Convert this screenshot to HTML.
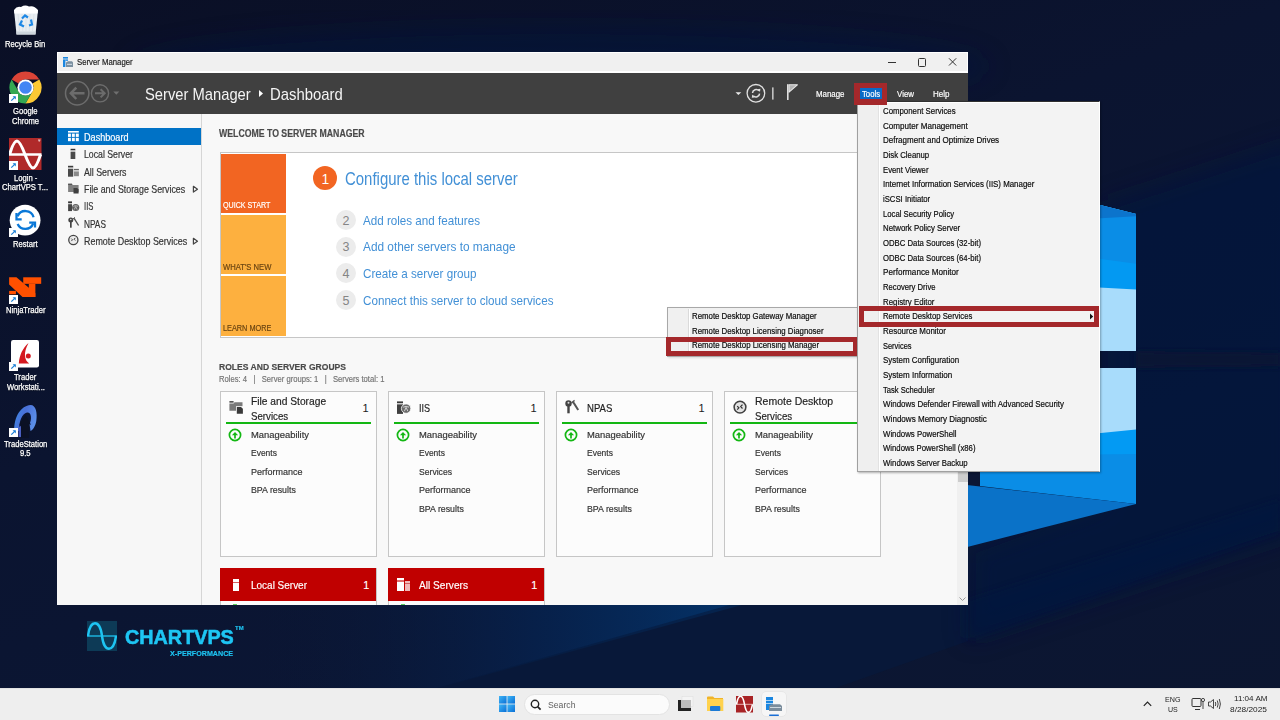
<!DOCTYPE html>
<html><head><meta charset="utf-8"><title>Server Manager</title>
<style>
html,body{margin:0;padding:0;}
body{width:1280px;height:720px;overflow:hidden;position:relative;font-family:"Liberation Sans",sans-serif;background:#0b1430;}
.r{position:absolute;box-sizing:content-box;}
.t{position:absolute;white-space:pre;transform-origin:0 0;-webkit-text-stroke-width:0.18px;}
</style></head><body>
<div class="r" style="left:0;top:0;width:1280px;height:720px;background:linear-gradient(160deg,#0a0f25 0%,#0b1430 40%,#0b1634 70%,#0c1630 100%);"></div>
<svg class="r" style="left:0;top:0" width="1280" height="720" viewBox="0 0 1280 720">
<defs>
<linearGradient id="beam" x1="0" y1="0" x2="1" y2="1"><stop offset="0" stop-color="#0c1d44" stop-opacity="0.0"/><stop offset="1" stop-color="#0a1f4a" stop-opacity="0.6"/></linearGradient>
</defs>
<filter id="bl" x="-20%" y="-20%" width="140%" height="140%"><feGaussianBlur stdDeviation="3"/></filter>
<filter id="bl2" x="-20%" y="-20%" width="140%" height="140%"><feGaussianBlur stdDeviation="12"/></filter>
<ellipse cx="560" cy="66" rx="430" ry="40" fill="#05183f" opacity="0.45" filter="url(#bl2)"/>
<linearGradient id="bm" x1="250" y1="0" x2="760" y2="0" gradientUnits="userSpaceOnUse"><stop offset="0" stop-color="#0a1634" stop-opacity="0"/><stop offset="0.55" stop-color="#06224e" stop-opacity="0.8"/><stop offset="1" stop-color="#04356c"/></linearGradient>
<polygon points="200,600 760,600 430,690 200,690" fill="url(#bm)"/>
<polygon points="430,690 740,602 968,602 968,641 830,690" fill="#071a3e" opacity="0.6"/>
<polygon points="1100,205 1300,140 1300,532 968,641 968,548 1100,500" fill="#05193f" opacity="0.6" filter="url(#bl2)"/>
<polygon points="1280,532 968,641 968,600 1280,500" fill="#05193f" opacity="0.5" filter="url(#bl)"/>
<polygon points="1136,351 1280,352.5 1280,366.5 1136,368" fill="#0a1530" opacity="0.7" filter="url(#bl)"/>
<!-- upper right pane -->
<polygon points="960,170 1136,214 1136,351 960,351" fill="#a8dcfb"/>
<polygon points="960,170 1136,214 1136,289.5 960,280" fill="#0399f2"/>
<polygon points="960,170 1136,214 1136,263.7 960,240" fill="#0a8de6"/>
<polygon points="960,170 1136,214 1136,216.2 960,226" fill="#0c74cc"/>
<!-- lower right pane -->
<polygon points="980,368 1136,368 1136,504 980,486" fill="#0a8de6"/>
<polygon points="960,368 1136,368 1136,454 960,456" fill="#039af3"/>
<polygon points="960,368 1136,368 1136,429.4 960,447" fill="#a8dcfb"/>
<!-- light wedge on floor -->
<polygon points="940,482 1136,504 940,554" fill="#0a72c8"/>
</svg>
<svg class="r" style="left:12px;top:4px" width="28" height="32" viewBox="0 0 28 32">
<path d="M2 6 L26 6 L23.5 30.5 L4.5 30.5 Z" fill="#e9eef2"/>
<path d="M2 6 Q5 1.5 9 3 Q13 0.5 17 2.5 Q22 1 26 6 L25.6 9.5 L2.4 9.5 Z" fill="#ffffff"/>
<path d="M4.5 30.5 L23.5 30.5 L23.8 27.5 L4.2 27.5 Z" fill="#cdd5dc"/>
<path d="M6 10 L7.5 27 M10 10 L10.8 27 M14 10 V27 M18 10 L17.2 27 M22 10 L20.5 27" stroke="#d3dbe2" stroke-width="0.6"/>
<g fill="none" stroke="#1e88e5" stroke-width="2.2"><path d="M10 14.5 L13 11.5 L16 13.5"/><path d="M19 15.5 L20 20.5 L17 21.5"/><path d="M12 22.5 L8 20.5 L10 16.5"/></g>
</svg>
<div class="t m" id="t1" style="left:5.38px;top:40.00px;font-size:8.40px;line-height:8.40px;color:#ffffff;transform:scaleX(0.9100);text-shadow:0 1px 1px rgba(0,0,0,0.55);-webkit-text-stroke-width:0.25px;">Recycle Bin</div>
<svg class="r" style="left:9px;top:71px" width="33" height="33" viewBox="-16.5 -16.5 33 33">
<path d="M0 -16 A16 16 0 0 1 13.86 -8 L0 -8 A8 8 0 0 0 -6.93 -4 L-13.86 -8 A16 16 0 0 1 0 -16Z" fill="#db4437"/>
<path d="M13.86 -8 A16 16 0 0 1 0 16 L6.93 4 A8 8 0 0 0 6.93 -4 Z" fill="#fcc934"/>
<path d="M-13.86 -8 L-6.93 4 A8 8 0 0 0 6.93 4 L0 16 A16 16 0 0 1 -13.86 -8Z" fill="#34a853"/>
<circle r="8.1" fill="#fff"/><circle r="6.3" fill="#4285f4"/>
</svg>
<svg class="r" style="left:9px;top:94px" width="9" height="9" viewBox="0 0 9 9"><rect width="9" height="9" fill="#fff"/><path d="M2.3 6.7 L6.2 2.8" stroke="#1a7fd6" stroke-width="1.2" fill="none"/><path d="M3.6 2.2 H6.8 V5.4 Z" fill="#1a7fd6"/></svg>
<div class="t m" id="t2" style="left:13.21px;top:107.00px;font-size:8.40px;line-height:8.40px;color:#ffffff;transform:scaleX(0.9100);text-shadow:0 1px 1px rgba(0,0,0,0.55);-webkit-text-stroke-width:0.25px;">Google</div>
<div class="t m" id="t3" style="left:11.94px;top:117.00px;font-size:8.40px;line-height:8.40px;color:#ffffff;transform:scaleX(0.9100);text-shadow:0 1px 1px rgba(0,0,0,0.55);-webkit-text-stroke-width:0.25px;">Chrome</div>
<svg class="r" style="left:9px;top:137.5px" width="32.5" height="32.5" viewBox="0 0 32.5 32.5">
<rect width="32.5" height="32.5" fill="#b02a2a"/>
<line x1="0" y1="16.5" x2="32.5" y2="16.5" stroke="#fff" stroke-width="2.6"/>
<path d="M0.6 16.5 C 2.61 9.59 5.33 3 8 3 S 13.39 9.59 16 16.5 S 21.33 30 24 30 S 29.39 23.41 31.6 16.5" stroke="#fff" stroke-width="3" fill="none"/>
<path d="M29 2 H31.5 M30.2 2 V3.8" stroke="#fff" stroke-width="0.7"/>
</svg>
<svg class="r" style="left:9px;top:161px" width="9" height="9" viewBox="0 0 9 9"><rect width="9" height="9" fill="#fff"/><path d="M2.3 6.7 L6.2 2.8" stroke="#1a7fd6" stroke-width="1.2" fill="none"/><path d="M3.6 2.2 H6.8 V5.4 Z" fill="#1a7fd6"/></svg>
<div class="t m" id="t4" style="left:13.85px;top:174.00px;font-size:8.40px;line-height:8.40px;color:#ffffff;transform:scaleX(0.9100);text-shadow:0 1px 1px rgba(0,0,0,0.55);-webkit-text-stroke-width:0.25px;">Login -</div>
<div class="t m" id="t5" style="left:2.48px;top:183.00px;font-size:8.40px;line-height:8.40px;color:#ffffff;transform:scaleX(0.9100);text-shadow:0 1px 1px rgba(0,0,0,0.55);-webkit-text-stroke-width:0.25px;">ChartVPS T...</div>
<svg class="r" style="left:9px;top:204px" width="33" height="33" viewBox="0 0 33 33">
<circle cx="16.1" cy="16.2" r="15.4" fill="#fff"/>
<g stroke="#0a78d8" stroke-width="2.3" fill="none">
<path d="M8.6 12.2 A8.5 8.5 0 0 1 24.6 13.2"/>
<path d="M7.5 9 V15.4 H12.7"/>
<path d="M8.6 20 A8.5 8.5 0 0 0 24.2 19.5"/>
<path d="M20.2 18.6 H26 V23.5"/>
</g>
</svg>
<svg class="r" style="left:9px;top:228px" width="9" height="9" viewBox="0 0 9 9"><rect width="9" height="9" fill="#fff"/><path d="M2.3 6.7 L6.2 2.8" stroke="#1a7fd6" stroke-width="1.2" fill="none"/><path d="M3.6 2.2 H6.8 V5.4 Z" fill="#1a7fd6"/></svg>
<div class="t m" id="t6" style="left:13.21px;top:240.00px;font-size:8.40px;line-height:8.40px;color:#ffffff;transform:scaleX(0.9100);text-shadow:0 1px 1px rgba(0,0,0,0.55);-webkit-text-stroke-width:0.25px;">Restart</div>
<svg class="r" style="left:5px;top:270px" width="40" height="30" viewBox="0 0 40 30" fill="#ff5000">
<polygon points="4.13,7.29 11.42,7.29 30.37,23.32 30.37,26.97 17.49,26.97 4.13,14.58"/>
<polygon points="18.22,7.29 36.2,7.29 36.2,13.85 18.22,13.85"/>
<polygon points="23.81,13.85 30.37,13.85 30.37,26.97 23.81,26.97"/>
<polygon points="4.13,20.89 10.93,20.89 10.93,24.3 4.13,24.3"/>
</svg>
<svg class="r" style="left:9px;top:295px" width="9" height="9" viewBox="0 0 9 9"><rect width="9" height="9" fill="#fff"/><path d="M2.3 6.7 L6.2 2.8" stroke="#1a7fd6" stroke-width="1.2" fill="none"/><path d="M3.6 2.2 H6.8 V5.4 Z" fill="#1a7fd6"/></svg>
<div class="t m" id="t7" style="left:5.73px;top:306.00px;font-size:8.40px;line-height:8.40px;color:#ffffff;transform:scaleX(0.9100);text-shadow:0 1px 1px rgba(0,0,0,0.55);-webkit-text-stroke-width:0.25px;">NinjaTrader</div>
<svg class="r" style="left:10.8px;top:340px" width="28" height="28" viewBox="0 0 28 28">
<rect width="28" height="27.4" rx="2.2" fill="#fff"/>
<path d="M17.5 3 C 11.5 8.5, 8.5 15, 7.8 23.4 L 18.2 23.4 C 13.5 20.5, 12 13, 17.5 3Z" fill="#d41920"/>
<circle cx="17.3" cy="16.1" r="2.5" fill="#d41920"/>
</svg>
<svg class="r" style="left:9px;top:362px" width="9" height="9" viewBox="0 0 9 9"><rect width="9" height="9" fill="#fff"/><path d="M2.3 6.7 L6.2 2.8" stroke="#1a7fd6" stroke-width="1.2" fill="none"/><path d="M3.6 2.2 H6.8 V5.4 Z" fill="#1a7fd6"/></svg>
<div class="t m" id="t8" style="left:14.42px;top:373.00px;font-size:8.40px;line-height:8.40px;color:#ffffff;transform:scaleX(0.9100);text-shadow:0 1px 1px rgba(0,0,0,0.55);-webkit-text-stroke-width:0.25px;">Trader</div>
<div class="t m" id="t9" style="left:6.51px;top:383.00px;font-size:8.40px;line-height:8.40px;color:#ffffff;transform:scaleX(0.9100);text-shadow:0 1px 1px rgba(0,0,0,0.55);-webkit-text-stroke-width:0.25px;">Workstati...</div>
<svg class="r" style="left:8px;top:400px" width="34" height="38" viewBox="0 0 34 38">
<defs><linearGradient id="tsg" x1="0" y1="0" x2="1" y2="0.4"><stop offset="0" stop-color="#3a8ee6"/><stop offset="0.5" stop-color="#4a70d8"/><stop offset="1" stop-color="#5a8ee8"/></linearGradient></defs>
<path d="M6.3 30 C 6 17, 13 5.5, 22.5 5 C 28 5, 29.5 13, 28.3 21 C 27.5 26, 25 30, 22.5 31 L 21.5 24 C 24 19, 23.5 12, 19 12.5 C 14 13.5, 11 21, 11 31 Z" fill="url(#tsg)"/>
<path d="M17.4 14.6 L11.3 24.8 L13.2 24.2 V38 H21.1 V24.2 L23 24.8 Z" fill="#0b1124"/>
<path d="M10.5 27 V37 H13 V26 Z" fill="#4a5fc0"/>
</svg>
<svg class="r" style="left:9px;top:428px" width="9" height="9" viewBox="0 0 9 9"><rect width="9" height="9" fill="#fff"/><path d="M2.3 6.7 L6.2 2.8" stroke="#1a7fd6" stroke-width="1.2" fill="none"/><path d="M3.6 2.2 H6.8 V5.4 Z" fill="#1a7fd6"/></svg>
<div class="t m" id="t10" style="left:3.82px;top:440.00px;font-size:8.40px;line-height:8.40px;color:#ffffff;transform:scaleX(0.9100);text-shadow:0 1px 1px rgba(0,0,0,0.55);-webkit-text-stroke-width:0.25px;">TradeStation</div>
<div class="t m" id="t11" style="left:20.20px;top:449.00px;font-size:8.40px;line-height:8.40px;color:#ffffff;transform:scaleX(0.9100);text-shadow:0 1px 1px rgba(0,0,0,0.55);-webkit-text-stroke-width:0.25px;">9.5</div>
<svg class="r" style="left:87px;top:621px" width="30" height="30" viewBox="0 0 30 30">
<rect width="30" height="30" fill="#0d3a56"/>
<line x1="0" y1="15" x2="30" y2="15" stroke="#1ec4f2" stroke-width="1.3"/>
<path d="M1 15 C 3 -2, 13 -2, 15 15 S 27 32, 29 15" stroke="#1ec4f2" stroke-width="2.4" fill="none"/>
</svg>
<div class="t m" id="t12" style="left:125.20px;top:626.00px;font-size:21.08px;line-height:21.08px;color:#1ec6f4;font-weight:700;transform:scaleX(0.9383);-webkit-text-stroke-width:0.6px;">CHARTVPS</div>
<div class="t m" id="t13" style="left:235.40px;top:625.00px;font-size:6.10px;line-height:6.10px;color:#1ec4f2;font-weight:700;transform:scaleX(0.9759);">TM</div>
<div class="t m" id="t14" style="left:169.60px;top:650.00px;font-size:7.70px;line-height:7.70px;color:#1ec4f2;font-weight:700;transform:scaleX(0.9290);">X-PERFORMANCE</div>
<div class="r" style="left:57.00px;top:52.00px;width:911.00px;height:553.00px;background:#ffffff;"></div>
<div class="r" style="left:58.00px;top:53.00px;width:909.00px;height:18.00px;background:#f0f0f0;"></div>
<svg class="r" style="left:62px;top:57px" width="12" height="11" viewBox="0 0 12 11">
<rect x="1" y="0" width="5" height="1.6" fill="#1a86e0"/><rect x="1" y="2.4" width="2.4" height="7.6" fill="#1a86e0"/><rect x="3.4" y="2.4" width="2.6" height="1.4" fill="#1a86e0"/>
<path d="M4 5.5 L6 4.2 H10 L11 5.5 V10 H4 Z" fill="#7a8fa0"/><rect x="5" y="6.8" width="5" height="1" fill="#d8e2ea"/>
</svg>
<div class="t m" id="t15" style="left:77.30px;top:58.00px;font-size:9.01px;line-height:9.01px;color:#1a1a1a;transform:scaleX(0.8616);">Server Manager</div>
<div class="r" style="left:888.30px;top:61.70px;width:7.40px;height:1.00px;background:#333;"></div>
<div class="r" style="left:918px;top:58.3px;width:6.4px;height:6.4px;border:1px solid #333;border-radius:1.5px"></div>
<svg class="r" style="left:948px;top:57px" width="10" height="10" viewBox="0 0 10 10"><path d="M1 1.3 L8.2 8.5 M8.2 1.3 L1 8.5" stroke="#333" stroke-width="1"/></svg>
<div class="r" style="left:57.00px;top:72.50px;width:911.00px;height:41.00px;background:#404040;"></div>
<svg class="r" style="left:57px;top:72px" width="80" height="42" viewBox="57 72 80 42">
<circle cx="77.2" cy="93.3" r="11.7" stroke="#6c6c6c" stroke-width="1.5" fill="none"/>
<path d="M71.5 93.3 H84.5 M76.3 87.6 L70.8 93.3 L76.3 99" stroke="#6c6c6c" stroke-width="2.5" fill="none"/>
<circle cx="100" cy="93.3" r="8.6" stroke="#6c6c6c" stroke-width="1.4" fill="none"/>
<path d="M95 93.3 H104.5 M100.6 89.2 L104.7 93.3 L100.6 97.4" stroke="#6c6c6c" stroke-width="2" fill="none"/>
<path d="M113.3 91.6 H119.3 L116.3 94.8 Z" fill="#6f6f6f"/>
</svg>
<div class="t m" id="t16" style="left:144.60px;top:86.00px;font-size:17.15px;line-height:17.15px;color:#f4f4f4;transform:scaleX(0.8600);-webkit-text-stroke-width:0;">Server Manager</div>
<svg class="r" style="left:258px;top:89px" width="6" height="9" viewBox="0 0 6 9"><path d="M1 1 L5 4.5 L1 8 Z" fill="#fff"/></svg>
<div class="t m" id="t17" style="left:270.00px;top:86.00px;font-size:17.15px;line-height:17.15px;color:#f4f4f4;transform:scaleX(0.8669);-webkit-text-stroke-width:0;">Dashboard</div>
<svg class="r" style="left:730px;top:80px" width="75" height="25" viewBox="730 80 75 25">
<path d="M735.5 92.3 H741.3 L738.4 95 Z" fill="#e8e8e8"/>
<circle cx="755.9" cy="93.3" r="8.8" stroke="#e0e0e0" stroke-width="1.3" fill="none"/>
<path d="M752.5 93 A3.7 3.7 0 0 1 759 90.8" stroke="#e0e0e0" stroke-width="1.5" fill="none"/>
<path d="M759.6 93.6 A3.7 3.7 0 0 1 753.2 95.8" stroke="#e0e0e0" stroke-width="1.5" fill="none"/>
<path d="M757.6 89.2 L760.4 88.8 L760 92 Z M754.6 97.4 L751.8 97.8 L752.2 94.6 Z" fill="#e0e0e0"/>
<rect x="772.2" y="87.4" width="1.3" height="12.2" fill="#e0e0e0"/>
<rect x="787" y="84.2" width="1.6" height="15.8" fill="#e0e0e0"/>
<path d="M789 84.8 L797.4 84.8 L789 92.2 Z" fill="#b4b4b4" stroke="#e6e6e6" stroke-width="1.1" stroke-linejoin="round"/>
</svg>
<div class="t m" id="t18" style="left:816.10px;top:90.00px;font-size:8.72px;line-height:8.72px;color:#ffffff;transform:scaleX(0.9043);">Manage</div>
<div class="t m" id="t19" style="left:897.30px;top:90.00px;font-size:8.72px;line-height:8.72px;color:#ffffff;transform:scaleX(0.9067);">View</div>
<div class="t m" id="t20" style="left:933.10px;top:90.00px;font-size:8.72px;line-height:8.72px;color:#ffffff;transform:scaleX(0.9143);">Help</div>
<div class="r" style="left:57.00px;top:113.50px;width:144.00px;height:491.50px;background:#f7f7f7;"></div>
<div class="r" style="left:201.00px;top:113.50px;width:1.00px;height:491.50px;background:#d6d6d6;"></div>
<div class="r" style="left:57.00px;top:128.00px;width:143.60px;height:17.00px;background:#0072c6;"></div>
<svg class="r" style="left:68px;top:131px" width="11" height="11" viewBox="0 0 11 11" fill="#fff">
<rect x="0" y="0" width="10.8" height="1.6"/>
<rect x="0" y="2.6" width="2.9" height="3.3"/><rect x="3.9" y="2.6" width="2.9" height="3.3"/><rect x="7.8" y="2.6" width="3" height="3.3"/>
<rect x="0" y="6.8" width="2.9" height="3.4"/><rect x="3.9" y="6.8" width="2.9" height="3.4"/><rect x="7.8" y="6.8" width="3" height="3.4"/>
</svg>
<div class="t m" id="t21" style="left:84.40px;top:133.00px;font-size:10.03px;line-height:10.03px;color:#ffffff;transform:scaleX(0.9082);">Dashboard</div>
<div class="t m" id="t22" style="left:84.40px;top:150.00px;font-size:10.03px;line-height:10.03px;color:#333333;transform:scaleX(0.8714);">Local Server</div>
<div class="t m" id="t23" style="left:84.40px;top:168.00px;font-size:10.03px;line-height:10.03px;color:#333333;transform:scaleX(0.8777);">All Servers</div>
<div class="t m" id="t24" style="left:84.40px;top:185.00px;font-size:10.03px;line-height:10.03px;color:#333333;transform:scaleX(0.8824);">File and Storage Services</div>
<div class="t m" id="t25" style="left:84.40px;top:202.00px;font-size:10.03px;line-height:10.03px;color:#333333;transform:scaleX(0.7673);">IIS</div>
<div class="t m" id="t26" style="left:84.40px;top:220.00px;font-size:10.03px;line-height:10.03px;color:#333333;transform:scaleX(0.8254);">NPAS</div>
<div class="t m" id="t27" style="left:84.40px;top:237.00px;font-size:10.03px;line-height:10.03px;color:#333333;transform:scaleX(0.8904);">Remote Desktop Services</div>
<svg class="r" style="left:57px;top:113px" width="144" height="140" viewBox="57 113 144 140">
<rect x="70.6" y="148.8" width="4.7" height="1.6" fill="#333"/><rect x="70.6" y="150.4" width="4.7" height="1.5" fill="#c4c4c4"/><rect x="70.6" y="151.9" width="4.7" height="7.1" fill="#4a4a4a"/>
<rect x="68" y="165.8" width="5.2" height="1.8" fill="#3c3c3c"/><rect x="68" y="167.6" width="5.2" height="1.4" fill="#c4c4c4"/><rect x="68" y="169" width="5.2" height="7.7" fill="#4a4a4a"/>
<rect x="73.9" y="168.9" width="5" height="1.4" fill="#666"/><rect x="73.9" y="170.3" width="5" height="1.2" fill="#d0d0d0"/><rect x="73.9" y="171.5" width="5" height="4.7" fill="#8a8a8a"/>
<path d="M68.1 183.7 H72 L72.8 185 H78.6 V192 H68.1 Z" fill="#808080"/><path d="M68.1 183.7 H72 V185 H68.1 Z" fill="#555"/><path d="M73.5 188 H77.2 L78.6 189.4 V193.4 H73.5 Z" fill="#3e3e3e"/>
<rect x="68.1" y="201.4" width="3.9" height="1.6" fill="#333"/><rect x="68.1" y="203" width="3.9" height="1.2" fill="#c4c4c4"/><rect x="68.1" y="204.2" width="3.9" height="6.9" fill="#444"/>
<circle cx="75.7" cy="207.5" r="3.6" fill="#5e5e5e"/><path d="M73.4 206.3 Q75.7 205 78 206.3 M74.3 209.5 L75.7 206.5 L77.1 209.5" stroke="#d8d8d8" stroke-width="0.7" fill="none"/>
<circle cx="70.8" cy="219.9" r="2.5" fill="#444"/><circle cx="70.8" cy="219.5" r="0.8" fill="#ddd"/><rect x="70" y="221.5" width="1.7" height="6.2" fill="#444"/>
<path d="M73.8 218.2 L74.8 219.5 L78.6 225.5" stroke="#555" stroke-width="1.4" fill="none"/><path d="M72.8 219.2 L74.9 217.3" stroke="#555" stroke-width="1" fill="none"/>
<circle cx="73.35" cy="240" r="4.6" fill="#ececec" stroke="#444" stroke-width="1.3"/>
<path d="M71.3 238.6 L72.5 239.8 L71.3 241.1 M75.3 237.9 L74.1 239.2 L75.3 240.5" stroke="#333" stroke-width="0.9" fill="none"/>
<path d="M193.4 186.3 L197.5 189.2 L193.4 192.1 Z" fill="none" stroke="#444" stroke-width="1.2" stroke-linejoin="round"/>
<path d="M193.4 238.3 L197.5 241.2 L193.4 244.1 Z" fill="none" stroke="#444" stroke-width="1.2" stroke-linejoin="round"/>
</svg>
<div class="r" style="left:202.00px;top:113.50px;width:755.00px;height:491.50px;background:#f8f8f8;"></div>
<div class="t m" id="t28" style="left:218.90px;top:129.00px;font-size:10.17px;line-height:10.17px;color:#4a4a4a;font-weight:700;transform:scaleX(0.8591);">WELCOME TO SERVER MANAGER</div>
<div class="r" style="left:219.6px;top:152.3px;width:660px;height:183.7px;border:1px solid #c6c6c6;background:#ffffff"></div>
<div class="r" style="left:221.00px;top:154.00px;width:64.70px;height:58.80px;background:#f26522;"></div>
<div class="r" style="left:221.00px;top:215.00px;width:64.70px;height:58.80px;background:#fdb03f;"></div>
<div class="r" style="left:221.00px;top:276.00px;width:64.70px;height:59.50px;background:#fdb03f;"></div>
<div class="t m" id="t29" style="left:223.10px;top:202.00px;font-size:8.14px;line-height:8.14px;color:#ffffff;transform:scaleX(0.8780);">QUICK START</div>
<div class="t m" id="t30" style="left:223.10px;top:264.00px;font-size:8.14px;line-height:8.14px;color:#6b4512;transform:scaleX(0.9398);">WHAT&#x27;S NEW</div>
<div class="t m" id="t31" style="left:223.10px;top:325.00px;font-size:8.14px;line-height:8.14px;color:#6b4512;transform:scaleX(0.9007);">LEARN MORE</div>
<div class="r" style="left:313.3px;top:166px;width:24px;height:24px;border-radius:50%;background:#f26522"></div>
<div class="t m" id="t32" style="left:321.42px;top:173.00px;font-size:13.95px;line-height:13.95px;color:#ffffff;-webkit-text-stroke-width:0;">1</div>
<div class="t m" id="t33" style="left:344.50px;top:171.00px;font-size:17.44px;line-height:17.44px;color:#4290d6;transform:scaleX(0.8572);-webkit-text-stroke-width:0;">Configure this local server</div>
<div class="r" style="left:336px;top:210.00px;width:20px;height:20px;border-radius:50%;background:#ececec"></div>
<div class="t m" id="t34" style="left:342.52px;top:215.00px;font-size:12.50px;line-height:12.50px;color:#858585;-webkit-text-stroke-width:0;">2</div>
<div class="t m" id="t35" style="left:363.20px;top:215.00px;font-size:12.79px;line-height:12.79px;color:#4290d6;transform:scaleX(0.9097);-webkit-text-stroke-width:0;">Add roles and features</div>
<div class="r" style="left:336px;top:236.67px;width:20px;height:20px;border-radius:50%;background:#ececec"></div>
<div class="t m" id="t36" style="left:342.52px;top:241.00px;font-size:12.50px;line-height:12.50px;color:#858585;-webkit-text-stroke-width:0;">3</div>
<div class="t m" id="t37" style="left:363.20px;top:241.00px;font-size:12.79px;line-height:12.79px;color:#4290d6;transform:scaleX(0.9258);-webkit-text-stroke-width:0;">Add other servers to manage</div>
<div class="r" style="left:336px;top:263.34px;width:20px;height:20px;border-radius:50%;background:#ececec"></div>
<div class="t m" id="t38" style="left:342.52px;top:268.00px;font-size:12.50px;line-height:12.50px;color:#858585;-webkit-text-stroke-width:0;">4</div>
<div class="t m" id="t39" style="left:363.20px;top:268.00px;font-size:12.79px;line-height:12.79px;color:#4290d6;transform:scaleX(0.9129);-webkit-text-stroke-width:0;">Create a server group</div>
<div class="r" style="left:336px;top:290.01px;width:20px;height:20px;border-radius:50%;background:#ececec"></div>
<div class="t m" id="t40" style="left:342.52px;top:295.00px;font-size:12.50px;line-height:12.50px;color:#858585;-webkit-text-stroke-width:0;">5</div>
<div class="t m" id="t41" style="left:363.20px;top:295.00px;font-size:12.79px;line-height:12.79px;color:#4290d6;transform:scaleX(0.9121);-webkit-text-stroke-width:0;">Connect this server to cloud services</div>
<div class="t m" id="t42" style="left:219.10px;top:362.00px;font-size:9.45px;line-height:9.45px;color:#4a4a4a;font-weight:700;transform:scaleX(0.9070);">ROLES AND SERVER GROUPS</div>
<div class="t m" id="t43" style="left:219.00px;top:375.00px;font-size:8.72px;line-height:8.72px;color:#747474;transform:scaleX(0.8767);">Roles: 4   |   Server groups: 1   |   Servers total: 1</div>
<div class="r" style="left:220px;top:390.9px;width:155px;height:164.5px;border:1px solid #c6c6c6;background:#fcfcfc"></div>
<div class="t m" id="t44" style="left:251.00px;top:396.00px;font-size:11.19px;line-height:11.19px;color:#222222;transform:scaleX(0.9148);">File and Storage</div>
<div class="t m" id="t45" style="left:251.00px;top:411.00px;font-size:11.19px;line-height:11.19px;color:#222222;transform:scaleX(0.8670);">Services</div>
<div class="t m" id="t46" style="left:362.60px;top:403.00px;font-size:11.05px;line-height:11.05px;color:#222222;-webkit-text-stroke-width:0;">1</div>
<div class="r" style="left:226.00px;top:422.10px;width:144.70px;height:2.00px;background:#13b713;"></div>
<svg class="r" style="left:228.0px;top:427.5px" width="14" height="14" viewBox="0 0 14 14"><circle cx="7" cy="7" r="5.6" stroke="#13b713" stroke-width="1.7" fill="none"/><path d="M7 10.6 V5.5" stroke="#13b713" stroke-width="1.7" fill="none"/><path d="M3.9 7.3 L7 3.9 L10.1 7.3 Z" fill="#13b713"/></svg>
<div class="t m" id="t47" style="left:251.00px;top:430.00px;font-size:9.45px;line-height:9.45px;color:#333333;transform:scaleX(0.9960);">Manageability</div>
<div class="t m" id="t48" style="left:251.00px;top:448.00px;font-size:9.45px;line-height:9.45px;color:#333333;transform:scaleX(0.8975);">Events</div>
<div class="t m" id="t49" style="left:251.00px;top:467.00px;font-size:9.45px;line-height:9.45px;color:#333333;transform:scaleX(0.9532);">Performance</div>
<div class="t m" id="t50" style="left:251.00px;top:485.00px;font-size:9.45px;line-height:9.45px;color:#333333;transform:scaleX(0.9315);">BPA results</div>
<div class="r" style="left:388px;top:390.9px;width:155px;height:164.5px;border:1px solid #c6c6c6;background:#fcfcfc"></div>
<div class="t m" id="t51" style="left:419.00px;top:403.00px;font-size:11.19px;line-height:11.19px;color:#222222;transform:scaleX(0.8110);">IIS</div>
<div class="t m" id="t52" style="left:530.60px;top:403.00px;font-size:11.05px;line-height:11.05px;color:#222222;-webkit-text-stroke-width:0;">1</div>
<div class="r" style="left:394.00px;top:422.10px;width:144.70px;height:2.00px;background:#13b713;"></div>
<svg class="r" style="left:396.0px;top:427.5px" width="14" height="14" viewBox="0 0 14 14"><circle cx="7" cy="7" r="5.6" stroke="#13b713" stroke-width="1.7" fill="none"/><path d="M7 10.6 V5.5" stroke="#13b713" stroke-width="1.7" fill="none"/><path d="M3.9 7.3 L7 3.9 L10.1 7.3 Z" fill="#13b713"/></svg>
<div class="t m" id="t53" style="left:419.00px;top:430.00px;font-size:9.45px;line-height:9.45px;color:#333333;transform:scaleX(0.9960);">Manageability</div>
<div class="t m" id="t54" style="left:419.00px;top:448.00px;font-size:9.45px;line-height:9.45px;color:#333333;transform:scaleX(0.8975);">Events</div>
<div class="t m" id="t55" style="left:419.00px;top:467.00px;font-size:9.45px;line-height:9.45px;color:#333333;transform:scaleX(0.9115);">Services</div>
<div class="t m" id="t56" style="left:419.00px;top:485.00px;font-size:9.45px;line-height:9.45px;color:#333333;transform:scaleX(0.9532);">Performance</div>
<div class="t m" id="t57" style="left:419.00px;top:504.00px;font-size:9.45px;line-height:9.45px;color:#333333;transform:scaleX(0.9315);">BPA results</div>
<div class="r" style="left:556px;top:390.9px;width:155px;height:164.5px;border:1px solid #c6c6c6;background:#fcfcfc"></div>
<div class="t m" id="t58" style="left:587.00px;top:403.00px;font-size:11.19px;line-height:11.19px;color:#222222;transform:scaleX(0.8536);">NPAS</div>
<div class="t m" id="t59" style="left:698.60px;top:403.00px;font-size:11.05px;line-height:11.05px;color:#222222;-webkit-text-stroke-width:0;">1</div>
<div class="r" style="left:562.00px;top:422.10px;width:144.70px;height:2.00px;background:#13b713;"></div>
<svg class="r" style="left:564.0px;top:427.5px" width="14" height="14" viewBox="0 0 14 14"><circle cx="7" cy="7" r="5.6" stroke="#13b713" stroke-width="1.7" fill="none"/><path d="M7 10.6 V5.5" stroke="#13b713" stroke-width="1.7" fill="none"/><path d="M3.9 7.3 L7 3.9 L10.1 7.3 Z" fill="#13b713"/></svg>
<div class="t m" id="t60" style="left:587.00px;top:430.00px;font-size:9.45px;line-height:9.45px;color:#333333;transform:scaleX(0.9960);">Manageability</div>
<div class="t m" id="t61" style="left:587.00px;top:448.00px;font-size:9.45px;line-height:9.45px;color:#333333;transform:scaleX(0.8975);">Events</div>
<div class="t m" id="t62" style="left:587.00px;top:467.00px;font-size:9.45px;line-height:9.45px;color:#333333;transform:scaleX(0.9115);">Services</div>
<div class="t m" id="t63" style="left:587.00px;top:485.00px;font-size:9.45px;line-height:9.45px;color:#333333;transform:scaleX(0.9532);">Performance</div>
<div class="t m" id="t64" style="left:587.00px;top:504.00px;font-size:9.45px;line-height:9.45px;color:#333333;transform:scaleX(0.9315);">BPA results</div>
<div class="r" style="left:724px;top:390.9px;width:155px;height:164.5px;border:1px solid #c6c6c6;background:#fcfcfc"></div>
<div class="t m" id="t65" style="left:755.00px;top:396.00px;font-size:11.19px;line-height:11.19px;color:#222222;transform:scaleX(0.9373);">Remote Desktop</div>
<div class="t m" id="t66" style="left:755.00px;top:411.00px;font-size:11.19px;line-height:11.19px;color:#222222;transform:scaleX(0.8670);">Services</div>
<div class="t m" id="t67" style="left:866.60px;top:403.00px;font-size:11.05px;line-height:11.05px;color:#222222;-webkit-text-stroke-width:0;">1</div>
<div class="r" style="left:730.00px;top:422.10px;width:144.70px;height:2.00px;background:#13b713;"></div>
<svg class="r" style="left:732.0px;top:427.5px" width="14" height="14" viewBox="0 0 14 14"><circle cx="7" cy="7" r="5.6" stroke="#13b713" stroke-width="1.7" fill="none"/><path d="M7 10.6 V5.5" stroke="#13b713" stroke-width="1.7" fill="none"/><path d="M3.9 7.3 L7 3.9 L10.1 7.3 Z" fill="#13b713"/></svg>
<div class="t m" id="t68" style="left:755.00px;top:430.00px;font-size:9.45px;line-height:9.45px;color:#333333;transform:scaleX(0.9960);">Manageability</div>
<div class="t m" id="t69" style="left:755.00px;top:448.00px;font-size:9.45px;line-height:9.45px;color:#333333;transform:scaleX(0.8975);">Events</div>
<div class="t m" id="t70" style="left:755.00px;top:467.00px;font-size:9.45px;line-height:9.45px;color:#333333;transform:scaleX(0.9115);">Services</div>
<div class="t m" id="t71" style="left:755.00px;top:485.00px;font-size:9.45px;line-height:9.45px;color:#333333;transform:scaleX(0.9532);">Performance</div>
<div class="t m" id="t72" style="left:755.00px;top:504.00px;font-size:9.45px;line-height:9.45px;color:#333333;transform:scaleX(0.9315);">BPA results</div>
<svg class="r" style="left:220px;top:395px" width="660" height="25" viewBox="220 395 660 25">
<path d="M229.4 401 H233.6 V402.7 H229.4 Z" fill="#555"/><path d="M229.4 403.6 H233.6 L234.5 402.3 H242.5 V410.7 H229.4 Z" fill="#7a7a7a"/>
<rect x="236" y="406.2" width="7.6" height="8.2" fill="#fcfcfc"/><path d="M236.8 406.9 H241 L242.9 408.8 V413.8 H236.8 Z" fill="#3a3a3a"/>
<rect x="397" y="401.4" width="6" height="1.8" fill="#3a3a3a"/><rect x="397" y="403.2" width="6" height="1.2" fill="#c8c8c8"/><rect x="397" y="404.4" width="6" height="9.5" fill="#404040"/>
<circle cx="406.1" cy="408.6" r="4.7" fill="#6a6a6a" stroke="#fcfcfc" stroke-width="0.8"/><path d="M403.2 407.2 Q406.1 405.6 409 407.2 M404.4 411.2 L406.1 407.4 L407.8 411.2" stroke="#dcdcdc" stroke-width="0.9" fill="none"/>
<circle cx="568.5" cy="403.4" r="3.2" fill="#444"/><circle cx="568.5" cy="402.8" r="1" fill="#ddd"/><rect x="567.3" y="405.5" width="2.4" height="7.8" fill="#444"/>
<path d="M572.6 401.6 L574.2 403.6 L578.2 410" stroke="#555" stroke-width="2" fill="none"/><path d="M571.4 403 L574.6 400.4" stroke="#555" stroke-width="1.4" fill="none"/>
<circle cx="740" cy="407.1" r="5.9" fill="#e2e2e2" stroke="#404040" stroke-width="1.5"/>
<path d="M737.2 406.1 L738.9 407.8 L737.2 409.6 M742.5 404.6 L740.7 406.6 L742.5 408.5" stroke="#333" stroke-width="1.2" fill="none"/>
</svg>
<div class="r" style="left:220px;top:568.3px;width:155px;height:35.7px;border:1px solid #c6c6c6;border-bottom:0;background:#fcfcfc"></div>
<div class="r" style="left:233.00px;top:604.00px;width:4.00px;height:1.00px;background:#5fd05f;"></div>
<div class="r" style="left:220.00px;top:568.30px;width:156.20px;height:32.70px;background:#c00000;"></div>
<div class="t m" id="t73" style="left:250.80px;top:580.00px;font-size:10.76px;line-height:10.76px;color:#ffffff;transform:scaleX(0.9278);">Local Server</div>
<div class="t m" id="t74" style="left:363.30px;top:580.00px;font-size:10.76px;line-height:10.76px;color:#ffffff;">1</div>
<div class="r" style="left:388px;top:568.3px;width:155px;height:35.7px;border:1px solid #c6c6c6;border-bottom:0;background:#fcfcfc"></div>
<div class="r" style="left:401.00px;top:604.00px;width:4.00px;height:1.00px;background:#5fd05f;"></div>
<div class="r" style="left:388.00px;top:568.30px;width:156.20px;height:32.70px;background:#c00000;"></div>
<div class="t m" id="t75" style="left:418.80px;top:580.00px;font-size:10.76px;line-height:10.76px;color:#ffffff;transform:scaleX(0.9426);">All Servers</div>
<div class="t m" id="t76" style="left:531.30px;top:580.00px;font-size:10.76px;line-height:10.76px;color:#ffffff;">1</div>
<div class="r" style="left:232.50px;top:579.20px;width:6.40px;height:11.90px;background:#ffffff;"></div>
<div class="r" style="left:232.50px;top:581.70px;width:6.40px;height:1.20px;background:#d86060;"></div>
<div class="r" style="left:397.10px;top:578.00px;width:6.80px;height:13.10px;background:#ffffff;"></div>
<div class="r" style="left:397.10px;top:580.00px;width:6.80px;height:1.70px;background:#e07070;"></div>
<div class="r" style="left:404.90px;top:581.20px;width:5.10px;height:9.90px;background:#f0b8b8;"></div>
<div class="r" style="left:404.90px;top:582.60px;width:5.10px;height:1.00px;background:#d06060;"></div>
<div class="r" style="left:957.00px;top:113.50px;width:11.00px;height:491.50px;background:#f0f0f0;"></div>
<div class="r" style="left:957.50px;top:113.50px;width:10.00px;height:368.50px;background:#cdcdcd;"></div>
<svg class="r" style="left:958px;top:596px" width="9" height="6" viewBox="0 0 9 6"><path d="M1.5 1.5 L4.5 4.5 L7.5 1.5" stroke="#999" stroke-width="1" fill="none"/></svg>
<div class="r" style="left:667px;top:307px;width:190px;height:48px;border:1px solid #a8a8a8;background:#f0f0f0;box-shadow:1px 1px 2px rgba(0,0,0,0.12)"></div>
<div class="r" style="left:688.00px;top:309.00px;width:1.00px;height:45.00px;background:#dadada;"></div>
<div class="r" style="left:689.00px;top:309.00px;width:1.00px;height:45.00px;background:#ffffff;"></div>
<div class="t m" id="t77" style="left:692.30px;top:312.00px;font-size:8.58px;line-height:8.58px;color:#0a0a0a;transform:scaleX(0.9137);">Remote Desktop Gateway Manager</div>
<div class="t m" id="t78" style="left:692.30px;top:327.00px;font-size:8.58px;line-height:8.58px;color:#0a0a0a;transform:scaleX(0.9132);">Remote Desktop Licensing Diagnoser</div>
<div class="t m" id="t79" style="left:692.30px;top:341.00px;font-size:8.58px;line-height:8.58px;color:#0a0a0a;transform:scaleX(0.9159);">Remote Desktop Licensing Manager</div>
<div class="r" style="left:666px;top:337px;width:182px;height:9px;border:5px solid #a4282b;"></div>
<div class="r" style="left:857px;top:101px;width:241px;height:369px;border:1px solid #a0a0a0;border-top-color:#303030;border-right-color:#ffffff;background:#f3f3f3;box-shadow:1px 1px 2px rgba(0,0,0,0.3)"></div>
<div class="r" style="left:858.00px;top:102.00px;width:241.00px;height:1.00px;background:#ffffff;"></div>
<div class="r" style="left:858.00px;top:103.00px;width:20.00px;height:368.00px;background:#efefef;"></div>
<div class="r" style="left:878.00px;top:103.00px;width:1.00px;height:368.00px;background:#e2e2e2;"></div>
<div class="r" style="left:879.00px;top:103.00px;width:1.00px;height:368.00px;background:#ffffff;"></div>
<div class="t m" id="t80" style="left:883.20px;top:107.00px;font-size:8.58px;line-height:8.58px;color:#0a0a0a;transform:scaleX(0.9118);">Component Services</div>
<div class="t m" id="t81" style="left:883.20px;top:122.00px;font-size:8.58px;line-height:8.58px;color:#0a0a0a;transform:scaleX(0.9409);">Computer Management</div>
<div class="t m" id="t82" style="left:883.20px;top:136.00px;font-size:8.58px;line-height:8.58px;color:#0a0a0a;transform:scaleX(0.9330);">Defragment and Optimize Drives</div>
<div class="t m" id="t83" style="left:883.20px;top:151.00px;font-size:8.58px;line-height:8.58px;color:#0a0a0a;transform:scaleX(0.9053);">Disk Cleanup</div>
<div class="t m" id="t84" style="left:883.20px;top:166.00px;font-size:8.58px;line-height:8.58px;color:#0a0a0a;transform:scaleX(0.9029);">Event Viewer</div>
<div class="t m" id="t85" style="left:883.20px;top:180.00px;font-size:8.58px;line-height:8.58px;color:#0a0a0a;transform:scaleX(0.9198);">Internet Information Services (IIS) Manager</div>
<div class="t m" id="t86" style="left:883.20px;top:195.00px;font-size:8.58px;line-height:8.58px;color:#0a0a0a;transform:scaleX(0.8999);">iSCSI Initiator</div>
<div class="t m" id="t87" style="left:883.20px;top:210.00px;font-size:8.58px;line-height:8.58px;color:#0a0a0a;transform:scaleX(0.8995);">Local Security Policy</div>
<div class="t m" id="t88" style="left:883.20px;top:224.00px;font-size:8.58px;line-height:8.58px;color:#0a0a0a;transform:scaleX(0.9150);">Network Policy Server</div>
<div class="t m" id="t89" style="left:883.20px;top:239.00px;font-size:8.58px;line-height:8.58px;color:#0a0a0a;transform:scaleX(0.9015);">ODBC Data Sources (32-bit)</div>
<div class="t m" id="t90" style="left:883.20px;top:254.00px;font-size:8.58px;line-height:8.58px;color:#0a0a0a;transform:scaleX(0.9015);">ODBC Data Sources (64-bit)</div>
<div class="t m" id="t91" style="left:883.20px;top:268.00px;font-size:8.58px;line-height:8.58px;color:#0a0a0a;transform:scaleX(0.9464);">Performance Monitor</div>
<div class="t m" id="t92" style="left:883.20px;top:283.00px;font-size:8.58px;line-height:8.58px;color:#0a0a0a;transform:scaleX(0.8953);">Recovery Drive</div>
<div class="t m" id="t93" style="left:883.20px;top:298.00px;font-size:8.58px;line-height:8.58px;color:#0a0a0a;transform:scaleX(0.9153);">Registry Editor</div>
<div class="t m" id="t94" style="left:883.20px;top:312.00px;font-size:8.58px;line-height:8.58px;color:#0a0a0a;transform:scaleX(0.9005);">Remote Desktop Services</div>
<div class="t m" id="t95" style="left:883.20px;top:327.00px;font-size:8.58px;line-height:8.58px;color:#0a0a0a;transform:scaleX(0.9291);">Resource Monitor</div>
<div class="t m" id="t96" style="left:883.20px;top:342.00px;font-size:8.58px;line-height:8.58px;color:#0a0a0a;transform:scaleX(0.8691);">Services</div>
<div class="t m" id="t97" style="left:883.20px;top:356.00px;font-size:8.58px;line-height:8.58px;color:#0a0a0a;transform:scaleX(0.9279);">System Configuration</div>
<div class="t m" id="t98" style="left:883.20px;top:371.00px;font-size:8.58px;line-height:8.58px;color:#0a0a0a;transform:scaleX(0.9350);">System Information</div>
<div class="t m" id="t99" style="left:883.20px;top:386.00px;font-size:8.58px;line-height:8.58px;color:#0a0a0a;transform:scaleX(0.8848);">Task Scheduler</div>
<div class="t m" id="t100" style="left:883.20px;top:400.00px;font-size:8.58px;line-height:8.58px;color:#0a0a0a;transform:scaleX(0.9259);">Windows Defender Firewall with Advanced Security</div>
<div class="t m" id="t101" style="left:883.20px;top:415.00px;font-size:8.58px;line-height:8.58px;color:#0a0a0a;transform:scaleX(0.9393);">Windows Memory Diagnostic</div>
<div class="t m" id="t102" style="left:883.20px;top:430.00px;font-size:8.58px;line-height:8.58px;color:#0a0a0a;transform:scaleX(0.9122);">Windows PowerShell</div>
<div class="t m" id="t103" style="left:883.20px;top:444.00px;font-size:8.58px;line-height:8.58px;color:#0a0a0a;transform:scaleX(0.9024);">Windows PowerShell (x86)</div>
<div class="t m" id="t104" style="left:883.20px;top:459.00px;font-size:8.58px;line-height:8.58px;color:#0a0a0a;transform:scaleX(0.9063);">Windows Server Backup</div>
<div class="r" style="left:859px;top:306.1px;width:230px;height:10.6px;border:5px solid #a4282b;"></div>
<svg class="r" style="left:1089px;top:313px" width="5" height="7" viewBox="0 0 5 7"><path d="M1 0.5 L4.2 3.5 L1 6.5 Z" fill="#111"/></svg>
<div class="r" style="left:854.00px;top:83.00px;width:33.00px;height:22.00px;background:#a4282b;"></div>
<div class="r" style="left:859.50px;top:88.40px;width:22.00px;height:10.80px;background:#0a6ac6;"></div>
<div class="t m" id="t105" style="left:862.00px;top:90.00px;font-size:8.72px;line-height:8.72px;color:#ffffff;transform:scaleX(0.8841);">Tools</div>
<div class="r" style="left:0.00px;top:688.00px;width:1280.00px;height:32.00px;background:#eeeeee;"></div>
<div class="r" style="left:0.00px;top:688.00px;width:1280.00px;height:1.00px;background:#e2e2e2;"></div>
<svg class="r" style="left:499px;top:696px" width="17" height="17" viewBox="0 0 17 17">
<defs><linearGradient id="wg" x1="0" y1="0" x2="1" y2="1"><stop offset="0" stop-color="#3fb6f6"/><stop offset="1" stop-color="#0a6fd6"/></linearGradient></defs>
<rect x="0" y="0" width="7.6" height="7.6" fill="url(#wg)"/><rect x="8.4" y="0" width="7.6" height="7.6" fill="url(#wg)"/>
<rect x="0" y="8.4" width="7.6" height="7.6" fill="url(#wg)"/><rect x="8.4" y="8.4" width="7.6" height="7.6" fill="url(#wg)"/>
</svg>
<div class="r" style="left:523.6px;top:693.8px;width:144.8px;height:19.6px;border:1px solid #e3e3e3;border-radius:11px;background:#fbfbfb"></div>
<svg class="r" style="left:530px;top:699px" width="12" height="12" viewBox="0 0 12 12"><circle cx="5" cy="5" r="3.7" stroke="#222" stroke-width="1.4" fill="none"/><path d="M7.6 7.6 L10.6 10.6" stroke="#222" stroke-width="1.6"/></svg>
<div class="t m" id="t106" style="left:548.10px;top:700.00px;font-size:9.88px;line-height:9.88px;color:#5f5f5f;transform:scaleX(0.8787);-webkit-text-stroke-width:0;">Search</div>
<svg class="r" style="left:677px;top:696px" width="18" height="17" viewBox="0 0 18 17">
<rect x="5" y="0.5" width="11" height="10" fill="#f4f4f4" stroke="#ddd" stroke-width="0.5"/>
<rect x="1" y="4" width="13" height="11" fill="#222"/><rect x="4" y="4" width="10" height="8" fill="#bdbdbd"/>
</svg>
<svg class="r" style="left:707px;top:696px" width="17" height="16" viewBox="0 0 17 16">
<path d="M0 1.5 Q0 0.5 1 0.5 H6 L7.5 2 H16 V14.5 H0 Z" fill="#f0b429"/><rect x="0" y="3" width="16.3" height="12" fill="#ffd24d"/>
<rect x="3" y="10" width="10.3" height="5" rx="1" fill="#1b7ad6"/>
</svg>
<svg class="r" style="left:736px;top:696px" width="17" height="17" viewBox="0 0 17 17">
<rect width="17" height="16.5" fill="#a82325"/><line x1="0" y1="8.3" x2="17" y2="8.3" stroke="#e9b0b0" stroke-width="1"/>
<path d="M0.5 8.3 C 2.5 -2.5, 6.5 -2.5, 8.5 8.3 S 14.5 19, 16.5 8.3" stroke="#fff" stroke-width="1.6" fill="none"/>
</svg>
<div class="r" style="left:762px;top:692px;width:24px;height:24px;border-radius:4px;background:#f6f6f6;box-shadow:0 0 0 0.5px #e0e0e0"></div>
<svg class="r" style="left:765px;top:696px" width="18" height="20" viewBox="0 0 18 20">
<rect x="1" y="1" width="7" height="13" fill="#1a86e0"/><rect x="1" y="4" width="7" height="0.8" fill="#cfe6fa"/><rect x="1" y="7" width="7" height="0.8" fill="#cfe6fa"/>
<path d="M4 10 L6 8.3 H15 L17 10 V15 H4 Z" fill="#7b8d9c"/><rect x="5" y="11" width="11" height="1" fill="#cfd9e0"/>
<rect x="4" y="18.5" width="10" height="1.5" rx="0.7" fill="#1a6fd6"/>
</svg>
<svg class="r" style="left:1143px;top:700px" width="9" height="7" viewBox="0 0 9 7"><path d="M0.8 5.8 L4.5 2 L8.2 5.8" stroke="#222" stroke-width="1.2" fill="none"/></svg>
<div class="t m" id="t107" style="left:1164.85px;top:696.00px;font-size:7.41px;line-height:7.41px;color:#222222;transform:scaleX(0.9650);-webkit-text-stroke-width:0;">ENG</div>
<div class="t m" id="t108" style="left:1167.70px;top:706.00px;font-size:7.41px;line-height:7.41px;color:#222222;transform:scaleX(0.9517);-webkit-text-stroke-width:0;">US</div>
<svg class="r" style="left:1191px;top:697px" width="32" height="14" viewBox="0 0 32 14">
<rect x="1" y="1.5" width="9" height="8" rx="1" fill="none" stroke="#333" stroke-width="1"/><path d="M4 12.5 H9" stroke="#333" stroke-width="1"/>
<circle cx="12" cy="3" r="1.6" fill="none" stroke="#333" stroke-width="0.9"/><path d="M12 4.6 V12" stroke="#333" stroke-width="0.9"/>
<path d="M17.5 5 H19.5 L22.5 2.5 V11.5 L19.5 9 H17.5 Z" fill="none" stroke="#333" stroke-width="0.9"/>
<path d="M24.3 5 Q25.3 7 24.3 9 M26.3 3.5 Q28 7 26.3 10.5 M28.3 2 Q30.5 7 28.3 12" stroke="#333" stroke-width="0.9" fill="none"/>
</svg>
<div class="t m" id="t109" style="left:1233.70px;top:695.00px;font-size:7.70px;line-height:7.70px;color:#222222;transform:scaleX(1.0494);-webkit-text-stroke-width:0;">11:04 AM</div>
<div class="t m" id="t110" style="left:1230.20px;top:706.00px;font-size:7.70px;line-height:7.70px;color:#222222;transform:scaleX(1.0818);-webkit-text-stroke-width:0;">8/28/2025</div>
</body></html>
